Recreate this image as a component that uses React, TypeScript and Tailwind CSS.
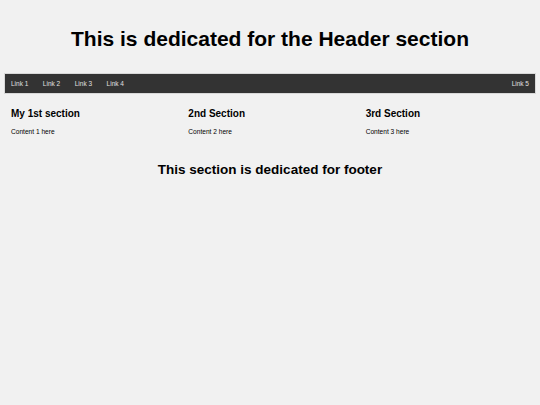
export default function App() {
  return (
    <div className="min-h-screen bg-[#f1f1f1] px-1 font-['Liberation_Sans',Arial,sans-serif] text-black">
      <header className="pt-[26px] pb-[21px] text-center">
        <h1 className="text-[21px] font-bold leading-[26px]">This is dedicated for the Header section</h1>
      </header>
      <nav className="flex h-[21px] items-center gap-[14.5px] border border-[#d8d8d8] bg-[#333333] px-[6px] text-[6.5px] text-[#e0e0e0]">
        <a>Link 1</a>
        <a>Link 2</a>
        <a>Link 3</a>
        <a>Link 4</a>
        <a className="ml-auto">Link 5</a>
      </nav>
      <div className="grid grid-cols-3">
        <section className="px-[7px] pt-[14px]">
          <h2 className="text-[10px] font-bold leading-[12px]">My 1st section</h2>
          <p className="mt-[7px] text-[6.6px] leading-[9px]">Content 1 here</p>
        </section>
        <section className="px-[7px] pt-[14px]">
          <h2 className="text-[10px] font-bold leading-[12px]">2nd Section</h2>
          <p className="mt-[7px] text-[6.6px] leading-[9px]">Content 2 here</p>
        </section>
        <section className="px-[7px] pt-[14px]">
          <h2 className="text-[10px] font-bold leading-[12px]">3rd Section</h2>
          <p className="mt-[7px] text-[6.6px] leading-[9px]">Content 3 here</p>
        </section>
      </div>
      <footer className="pt-[26px] text-center">
        <h2 className="text-[13.5px] font-bold leading-[16px]">This section is dedicated for footer</h2>
      </footer>
    </div>
  );
}
